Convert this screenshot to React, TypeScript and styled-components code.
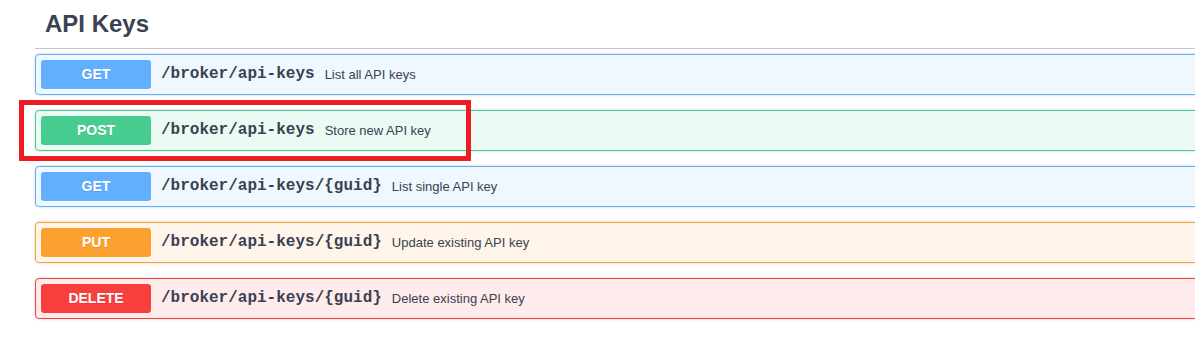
import React from "react";
import styled, { createGlobalStyle } from "styled-components";

const Global = createGlobalStyle`
  html, body { margin: 0; padding: 0; background: #fff; overflow: hidden; }
  body { font-family: "Liberation Sans", Arial, sans-serif; color: #3b4151; }
`;

type Method = "GET" | "POST" | "PUT" | "DELETE";

const palette: Record<Method, { main: string; bg: string }> = {
  GET: { main: "#61affe", bg: "rgba(97,175,254,.1)" },
  POST: { main: "#49cc90", bg: "rgba(73,204,144,.1)" },
  PUT: { main: "#fca130", bg: "rgba(252,161,48,.1)" },
  DELETE: { main: "#f93e3e", bg: "rgba(249,62,62,.1)" },
};

const Page = styled.div`
  position: relative;
  padding: 0 0 0 35px;
  width: 1200px;
`;

const Section = styled.section`
  display: flex;
  flex-direction: column;
`;

const Tag = styled.h4`
  margin: 0 0 5px;
  padding: 10px 20px 10px 10px;
  font-size: 24px;
  font-weight: 700;
  line-height: 27.6px;
  color: #3b4151;
  border-bottom: 1px solid rgba(59, 65, 81, 0.3);
`;

const Block = styled.div<{ $m: Method }>`
  margin: 0 0 15px;
  border: 1px solid ${(p) => palette[p.$m].main};
  border-radius: 4px;
  background: ${(p) => palette[p.$m].bg};
  box-shadow: 0 0 3px rgba(0, 0, 0, 0.19);
`;

const Summary = styled.div`
  display: flex;
  align-items: center;
  padding: 5px;
`;

const Badge = styled.span<{ $m: Method }>`
  box-sizing: border-box;
  min-width: 80px;
  width: 110px;
  padding: 6px 15px;
  border-radius: 3px;
  background: ${(p) => palette[p.$m].main};
  color: #fff;
  font-family: "Liberation Sans", Arial, sans-serif;
  font-size: 14px;
  font-weight: 700;
  line-height: 17px;
  text-align: center;
  text-shadow: 0 1px 0 rgba(0, 0, 0, 0.1);
`;

const Path = styled.span`
  padding: 0 10px;
  font-family: "Liberation Mono", "Courier New", monospace;
  font-size: 16px;
  font-weight: 700;
  color: #3b4151;
`;

const Desc = styled.span`
  font-family: "Liberation Sans", Arial, sans-serif;
  font-size: 13px;
  color: #3b4151;
`;

const Highlight = styled.div`
  position: absolute;
  left: 19px;
  top: 100px;
  width: 452px;
  height: 61px;
  box-sizing: border-box;
  border: 5px solid #ed1c24;
  pointer-events: none;
`;

const ops: { m: Method; path: string; desc: string }[] = [
  { m: "GET", path: "/broker/api-keys", desc: "List all API keys" },
  { m: "POST", path: "/broker/api-keys", desc: "Store new API key" },
  { m: "GET", path: "/broker/api-keys/{guid}", desc: "List single API key" },
  { m: "PUT", path: "/broker/api-keys/{guid}", desc: "Update existing API key" },
  { m: "DELETE", path: "/broker/api-keys/{guid}", desc: "Delete existing API key" },
];

export default function App() {
  return (
    <>
      <Global />
      <Page>
        <Section>
          <Tag>API Keys</Tag>
          {ops.map((o, i) => (
            <Block key={i} $m={o.m}>
              <Summary>
                <Badge $m={o.m}>{o.m}</Badge>
                <Path>{o.path}</Path>
                <Desc>{o.desc}</Desc>
              </Summary>
            </Block>
          ))}
        </Section>
        <Highlight />
      </Page>
    </>
  );
}
